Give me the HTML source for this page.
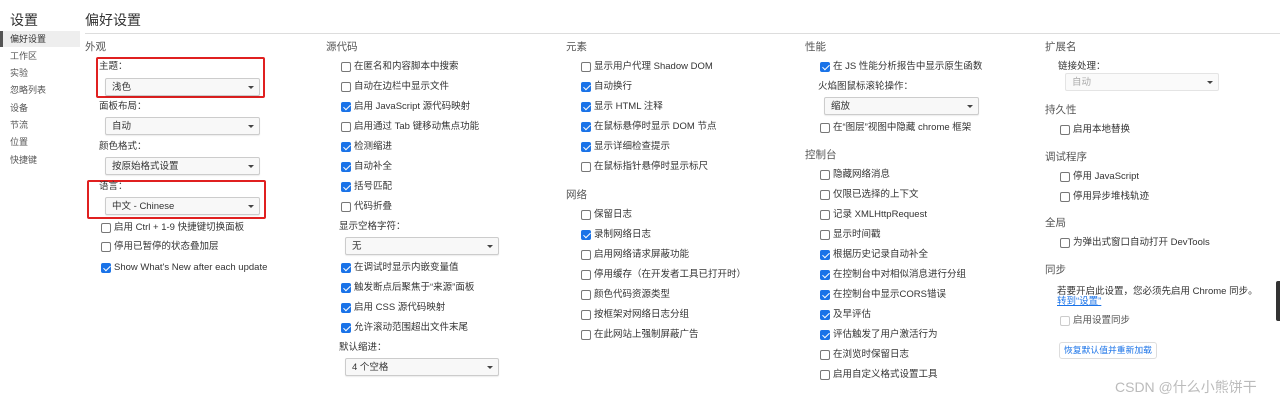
<!DOCTYPE html>
<html><head><meta charset="utf-8"><style>
*{margin:0;padding:0;box-sizing:border-box}
body{width:1280px;height:401px;background:#fff;position:relative;overflow:hidden;font-family:"Liberation Sans","Noto Sans CJK SC",sans-serif;color:#333;font-size:9.5px}
.a{position:absolute;white-space:nowrap;line-height:12px}
.h{position:absolute;white-space:nowrap;font-size:10.5px;color:#555;line-height:14px}
.r{position:absolute;white-space:nowrap;line-height:12px;display:flex;align-items:center;color:#333}
.c{display:inline-block;width:10px;height:10px;border:1px solid #777;border-radius:2px;margin-right:3px;background:#fff;position:relative;flex:none}
.k{background:#1a73e8;border-color:#1a73e8}
.k:after{content:"";position:absolute;left:2.5px;top:0px;width:3px;height:6px;border:solid #fff;border-width:0 1.5px 1.5px 0;transform:rotate(45deg)}
.s{position:absolute;height:18px;border:1px solid #ccc;border-radius:2px;background:#f8f8f8;padding-left:6px;line-height:17px;box-shadow:0 1px 1px rgba(0,0,0,.08)}
.s:after{content:"";position:absolute;right:5px;top:7px;border:3px solid transparent;border-top:3px solid #444;border-bottom:0}
.red{position:absolute;border:2px solid #e02020;border-radius:2px}
.nav{position:absolute;left:10px;font-size:9px;color:#555;line-height:12px}
</style></head><body>
<div class="a" style="left:10px;top:12px;font-size:14px;line-height:16px;color:#333">设置</div>
<div style="position:absolute;left:0;top:31px;width:80px;height:16px;background:#eee"></div>
<div style="position:absolute;left:0;top:31px;width:3px;height:16px;background:#555"></div>
<div class="nav" style="top:33px;color:#333">偏好设置</div>
<div class="nav" style="top:50px">工作区</div>
<div class="nav" style="top:67px">实验</div>
<div class="nav" style="top:84px">忽略列表</div>
<div class="nav" style="top:102px">设备</div>
<div class="nav" style="top:119px">节流</div>
<div class="nav" style="top:136px">位置</div>
<div class="nav" style="top:154px">快捷键</div>
<div class="a" style="left:85px;top:12px;font-size:14px;line-height:16px;color:#333">偏好设置</div>
<div style="position:absolute;left:85px;top:33px;width:1195px;height:1px;background:#ddd"></div>

<!-- col1 -->
<div class="h" style="left:85px;top:40px">外观</div>
<div class="red" style="left:96px;top:57px;width:169px;height:41px"></div>
<div class="a" style="left:99px;top:61px">主题：</div>
<div class="s" style="left:105px;top:78px;width:155px">浅色</div>
<div class="a" style="left:99px;top:101px">面板布局：</div>
<div class="s" style="left:105px;top:117px;width:155px">自动</div>
<div class="a" style="left:99px;top:141px">颜色格式：</div>
<div class="s" style="left:105px;top:157px;width:155px">按原始格式设置</div>
<div class="red" style="left:87px;top:180px;width:179px;height:39px"></div>
<div class="a" style="left:99px;top:181px">语言：</div>
<div class="s" style="left:105px;top:197px;width:155px">中文 - Chinese</div>
<div class="r" style="left:101px;top:222px"><i class="c"></i>启用 Ctrl + 1-9 快捷键切换面板</div>
<div class="r" style="left:101px;top:241px"><i class="c"></i>停用已暂停的状态叠加层</div>
<div class="r" style="left:101px;top:262px"><i class="c k"></i>Show What's New after each update</div>

<!-- col2 -->
<div class="h" style="left:326px;top:40px">源代码</div>
<div class="r" style="left:341px;top:61px"><i class="c"></i>在匿名和内容脚本中搜索</div>
<div class="r" style="left:341px;top:81px"><i class="c"></i>自动在边栏中显示文件</div>
<div class="r" style="left:341px;top:101px"><i class="c k"></i>启用 JavaScript 源代码映射</div>
<div class="r" style="left:341px;top:121px"><i class="c"></i>启用通过 Tab 键移动焦点功能</div>
<div class="r" style="left:341px;top:141px"><i class="c k"></i>检测缩进</div>
<div class="r" style="left:341px;top:161px"><i class="c k"></i>自动补全</div>
<div class="r" style="left:341px;top:181px"><i class="c k"></i>括号匹配</div>
<div class="r" style="left:341px;top:201px"><i class="c"></i>代码折叠</div>
<div class="a" style="left:339px;top:221px">显示空格字符：</div>
<div class="s" style="left:345px;top:237px;width:154px">无</div>
<div class="r" style="left:341px;top:262px"><i class="c k"></i>在调试时显示内嵌变量值</div>
<div class="r" style="left:341px;top:282px"><i class="c k"></i>触发断点后聚焦于“来源”面板</div>
<div class="r" style="left:341px;top:302px"><i class="c k"></i>启用 CSS 源代码映射</div>
<div class="r" style="left:341px;top:322px"><i class="c k"></i>允许滚动范围超出文件末尾</div>
<div class="a" style="left:339px;top:342px">默认缩进：</div>
<div class="s" style="left:345px;top:358px;width:154px">4 个空格</div>

<!-- col3 -->
<div class="h" style="left:566px;top:40px">元素</div>
<div class="r" style="left:581px;top:61px"><i class="c"></i>显示用户代理 Shadow DOM</div>
<div class="r" style="left:581px;top:81px"><i class="c k"></i>自动换行</div>
<div class="r" style="left:581px;top:101px"><i class="c k"></i>显示 HTML 注释</div>
<div class="r" style="left:581px;top:121px"><i class="c k"></i>在鼠标悬停时显示 DOM 节点</div>
<div class="r" style="left:581px;top:141px"><i class="c k"></i>显示详细检查提示</div>
<div class="r" style="left:581px;top:161px"><i class="c"></i>在鼠标指针悬停时显示标尺</div>
<div class="h" style="left:566px;top:188px">网络</div>
<div class="r" style="left:581px;top:209px"><i class="c"></i>保留日志</div>
<div class="r" style="left:581px;top:229px"><i class="c k"></i>录制网络日志</div>
<div class="r" style="left:581px;top:249px"><i class="c"></i>启用网络请求屏蔽功能</div>
<div class="r" style="left:581px;top:269px"><i class="c"></i>停用缓存（在开发者工具已打开时）</div>
<div class="r" style="left:581px;top:289px"><i class="c"></i>颜色代码资源类型</div>
<div class="r" style="left:581px;top:309px"><i class="c"></i>按框架对网络日志分组</div>
<div class="r" style="left:581px;top:329px"><i class="c"></i>在此网站上强制屏蔽广告</div>

<!-- col4 -->
<div class="h" style="left:805px;top:40px">性能</div>
<div class="r" style="left:820px;top:61px"><i class="c k"></i>在 JS 性能分析报告中显示原生函数</div>
<div class="a" style="left:818px;top:81px">火焰图鼠标滚轮操作：</div>
<div class="s" style="left:824px;top:97px;width:155px">缩放</div>
<div class="r" style="left:820px;top:122px"><i class="c"></i>在“图层”视图中隐藏 chrome 框架</div>
<div class="h" style="left:805px;top:148px">控制台</div>
<div class="r" style="left:820px;top:169px"><i class="c"></i>隐藏网络消息</div>
<div class="r" style="left:820px;top:189px"><i class="c"></i>仅限已选择的上下文</div>
<div class="r" style="left:820px;top:209px"><i class="c"></i>记录 XMLHttpRequest</div>
<div class="r" style="left:820px;top:229px"><i class="c"></i>显示时间戳</div>
<div class="r" style="left:820px;top:249px"><i class="c k"></i>根据历史记录自动补全</div>
<div class="r" style="left:820px;top:269px"><i class="c k"></i>在控制台中对相似消息进行分组</div>
<div class="r" style="left:820px;top:289px"><i class="c k"></i>在控制台中显示CORS错误</div>
<div class="r" style="left:820px;top:309px"><i class="c k"></i>及早评估</div>
<div class="r" style="left:820px;top:329px"><i class="c k"></i>评估触发了用户激活行为</div>
<div class="r" style="left:820px;top:349px"><i class="c"></i>在浏览时保留日志</div>
<div class="r" style="left:820px;top:369px"><i class="c"></i>启用自定义格式设置工具</div>

<!-- col5 -->
<div class="h" style="left:1045px;top:40px">扩展名</div>
<div class="a" style="left:1058px;top:61px">链接处理：</div>
<div class="s" style="left:1065px;top:73px;width:154px;background:#fafafa;border-color:#e4e4e4;color:#aaa;box-shadow:none">自动</div>
<div class="h" style="left:1045px;top:103px">持久性</div>
<div class="r" style="left:1060px;top:124px"><i class="c"></i>启用本地替换</div>
<div class="h" style="left:1045px;top:150px">调试程序</div>
<div class="r" style="left:1060px;top:171px"><i class="c"></i>停用 JavaScript</div>
<div class="r" style="left:1060px;top:191px"><i class="c"></i>停用异步堆栈轨迹</div>
<div class="h" style="left:1045px;top:216px">全局</div>
<div class="r" style="left:1060px;top:237px"><i class="c"></i>为弹出式窗口自动打开 DevTools</div>
<div class="h" style="left:1045px;top:263px">同步</div>
<div class="a" style="left:1057px;top:286px">若要开启此设置，您必须先启用 Chrome 同步。</div>
<div class="a" style="left:1057px;top:296px;color:#1a73e8;text-decoration:underline">转到“设置”</div>
<div class="r" style="left:1060px;top:315px;color:#555"><i class="c" style="border-color:#ccc"></i>启用设置同步</div>
<div class="a" style="left:1059px;top:342px;width:98px;height:17px;border:1px solid #ddd;border-radius:3px;color:#1a73e8;text-align:center;line-height:15px;font-size:8.8px">恢复默认值并重新加载</div>

<div style="position:absolute;left:1276px;top:281px;width:4px;height:40px;background:#333;border-radius:2px 0 0 2px"></div>
<div class="a" style="left:1115px;top:379px;font-size:14px;line-height:16px;color:#bbb">CSDN @什么小熊饼干</div>
</body></html>
